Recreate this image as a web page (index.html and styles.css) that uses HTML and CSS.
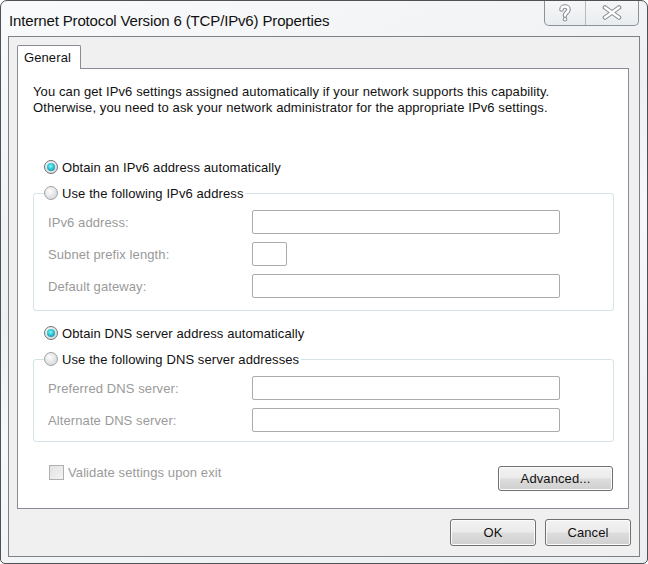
FILE: index.html
```html
<!DOCTYPE html>
<html>
<head>
  <title>Internet Protocol Version 6 (TCP/IPv6) Properties</title>
  <link rel="stylesheet" href="styles.css">
</head>
<body>
  <div class="window">
    <div class="titlebar">
      <span class="title">Internet Protocol Version 6 (TCP/IPv6) Properties</span>
      <div class="caption">
        <span class="cap-btn cap-help">
          <svg width="14" height="18" viewBox="0 0 14 18">
            <path d="M3.5 5.5 C3.5 1.5, 10.5 1.5, 10.5 5.5 C10.5 8.5, 7 8.5, 7 11.5" fill="none" stroke="#8a9097" stroke-width="4.6" stroke-linecap="round"/>
            <circle cx="7" cy="15.2" r="2.3" fill="#8a9097"/>
            <path d="M3.5 5.5 C3.5 1.5, 10.5 1.5, 10.5 5.5 C10.5 8.5, 7 8.5, 7 11.5" fill="none" stroke="#fff" stroke-width="2.4" stroke-linecap="round"/>
            <circle cx="7" cy="15.2" r="1.2" fill="#fff"/>
          </svg>
        </span>
        <span class="cap-btn cap-close">
          <svg width="20" height="15" viewBox="0 0 20 15">
            <path d="M3 2.5 L17 12.5 M17 2.5 L3 12.5" fill="none" stroke="#8a9097" stroke-width="4.6" stroke-linecap="round"/>
            <path d="M3 2.5 L17 12.5 M17 2.5 L3 12.5" fill="none" stroke="#fff" stroke-width="2.4" stroke-linecap="round"/>
          </svg>
        </span>
      </div>
    </div>

    <div class="client">
      <div class="tabs">
        <span class="tab">General</span>
      </div>
      <div class="panel">
        <p class="intro">You can get IPv6 settings assigned automatically if your network supports this capability.<br>Otherwise, you need to ask your network administrator for the appropriate IPv6 settings.</p>

        <div class="radio-row first">
          <span class="radio checked"></span>Obtain an IPv6 address automatically
        </div>
        <div class="group group-ip">
          <div class="legend"><span class="radio"></span>Use the following IPv6 address</div>
          <div class="field">
            <span class="field-label">IPv6 address:</span>
            <span class="textbox"></span>
          </div>
          <div class="field">
            <span class="field-label">Subnet prefix length:</span>
            <span class="textbox short"></span>
          </div>
          <div class="field">
            <span class="field-label">Default gateway:</span>
            <span class="textbox"></span>
          </div>
        </div>

        <div class="radio-row dns">
          <span class="radio checked"></span>Obtain DNS server address automatically
        </div>
        <div class="group group-dns">
          <div class="legend"><span class="radio"></span>Use the following DNS server addresses</div>
          <div class="field">
            <span class="field-label">Preferred DNS server:</span>
            <span class="textbox"></span>
          </div>
          <div class="field">
            <span class="field-label">Alternate DNS server:</span>
            <span class="textbox"></span>
          </div>
        </div>

        <div class="panel-footer">
          <div class="check-row">
            <span class="checkbox"></span>Validate settings upon exit
          </div>
          <span class="button advanced">Advanced...</span>
        </div>
      </div>

      <div class="dialog-buttons">
        <span class="button">OK</span>
        <span class="button">Cancel</span>
      </div>
    </div>
  </div>
</body>
</html>
```

FILE: styles.css
```css
html, body { margin: 0; padding: 0; background: #fff; }
body { font-family: "Liberation Sans", Arial, sans-serif; font-size: 13px; letter-spacing: 0.1px; color: #111; }

.window {
  box-sizing: border-box;
  width: 648px;
  height: 564px;
  border: 1px solid #4e5256;
  border-radius: 7px 7px 5px 5px;
  background: linear-gradient(160deg, #f9fafb 0%, #eef0f2 40%, #f7f8f9 55%, #eceef0 100%);
  overflow: hidden;
}

/* title bar */
.titlebar { height: 35px; display: flex; align-items: flex-start; }
.title { font-size: 15px; color: #111; margin: 11px 0 0 8px; letter-spacing: -0.15px; }
.caption {
  margin-left: auto;
  margin-right: 8px;
  margin-top: -1px;
  display: flex;
  height: 25px;
  border: 1px solid #8c9299;
  border-top: none;
  border-radius: 0 0 5px 5px;
  background: linear-gradient(#f6f7f8, #e9ecef);
  overflow: hidden;
}
.cap-btn { display: flex; align-items: center; justify-content: center; height: 25px; }
.cap-help { width: 40px; border-right: 1px solid #b5bac0; }
.cap-close { width: 52px; }

/* client area */
.client {
  box-sizing: border-box;
  width: 632px;
  height: 521px;
  margin-left: 7px;
  border: 1px solid #7c8288;
  background: #f0f0f0;
  padding: 8px 0 0 8px;
}
.tabs { display: flex; height: 23px; }
.tab {
  box-sizing: border-box;
  width: 64px;
  height: 24px;
  border: 1px solid #898c95;
  border-bottom: none;
  border-radius: 2px 2px 0 0;
  background: #fff;
  padding: 4px 0 0 6px;
  position: relative;
  z-index: 1;
}
.panel {
  box-sizing: border-box;
  width: 612px;
  height: 441px;
  border: 1px solid #898c95;
  background: #fff;
  padding: 15px 14px 0 15px;
}
.intro { margin: 0; line-height: 16px; color: #111; }

/* radios */
.radio-row { display: flex; align-items: center; height: 18px; margin-left: 11px; }
.radio-row.first { margin-top: 42px; }
.radio-row.dns { margin-top: 13px; }
.radio {
  box-sizing: border-box;
  width: 14px;
  height: 14px;
  border-radius: 50%;
  border: 1px solid #9ea3a8;
  background: radial-gradient(circle at 40% 35%, #fdfdfd, #dcdcdc 70%, #c8c8c8);
  margin-right: 4px;
  display: inline-flex;
  align-items: center;
  justify-content: center;
  flex: none;
}
.radio.checked { border-color: #6e7378; }
.radio.checked::after {
  content: "";
  width: 8px;
  height: 8px;
  border-radius: 50%;
  background: radial-gradient(circle at 45% 40%, #8ff4f7 0%, #2ac6d6 45%, #0b6f92 100%);
}

/* group boxes */
.group {
  border: 1px solid #d4e3e5;
  border-radius: 3px;
  margin-top: 17px;
  padding: 0 0 12px 14px;
}
.group-dns { padding-bottom: 9px; }
.legend {
  display: flex;
  align-items: center;
  width: fit-content;
  height: 18px;
  margin: -10px 0 0 -4px;
  padding-right: 2px;
  background: #fff;
}
.field { display: flex; align-items: center; margin-top: 8px; }
.field-label { width: 204px; color: #9a9a9a; }
.textbox {
  box-sizing: border-box;
  width: 308px;
  height: 24px;
  border: 1px solid #ababab;
  border-radius: 2px;
  background: #fff;
}
.textbox.short { width: 35px; }

/* footer */
.panel-footer { display: flex; align-items: flex-start; justify-content: space-between; margin-top: 22px; }
.check-row { display: flex; align-items: center; margin-left: 16px; color: #9a9a9a; height: 16px; }
.checkbox {
  box-sizing: border-box;
  width: 15px;
  height: 15px;
  border: 1px solid #b0b0b0;
  background: linear-gradient(135deg, #e2e2e2, #f4f4f4);
  margin-right: 4px;
}

.button {
  box-sizing: border-box;
  display: flex;
  align-items: center;
  justify-content: center;
  width: 86px;
  height: 27px;
  border: 1px solid #707070;
  border-radius: 3px;
  background: linear-gradient(#f2f2f2 0%, #ebebeb 48%, #dddddd 52%, #cfcfcf 100%);
  box-shadow: inset 0 0 0 1px #fcfcfc;
  color: #111;
}
.button.advanced { width: 115px; height: 25px; margin-top: 2px; margin-right: 1px; }

.dialog-buttons { display: flex; justify-content: flex-end; gap: 9px; margin-top: 10px; margin-right: 8px; }
```
